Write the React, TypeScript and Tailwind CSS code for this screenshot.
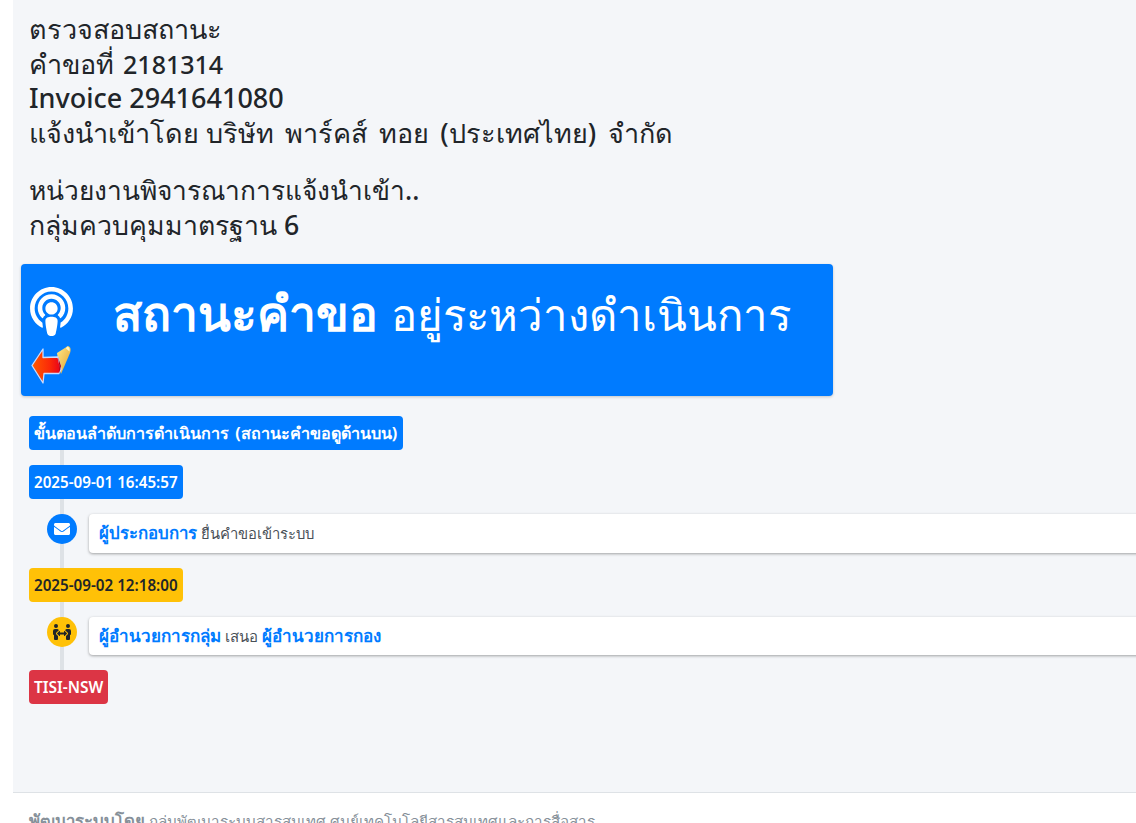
import { FaEnvelope, FaPeopleArrows, FaPodcast } from "react-icons/fa";

function BackIcon() {
  return (
    <svg width="42" height="40" viewBox="0 0 42 40" className="block">
      <defs>
        <linearGradient id="red" x1="0" x2="1" y1="0" y2="0">
          <stop offset="0" stopColor="#ff5a00" />
          <stop offset="0.6" stopColor="#fb2a08" />
          <stop offset="1" stopColor="#e8001c" />
        </linearGradient>
        <linearGradient id="paper" x1="0" x2="1" y1="0" y2="1">
          <stop offset="0" stopColor="#ffe98a" />
          <stop offset="1" stopColor="#e2a02e" />
        </linearGradient>
      </defs>
      <path d="M27 7L38 0c3 1 3 4 2 7L31 28l-2-8z" fill="url(#paper)" />
      <path d="M37 .5c2 .5 3 2 2.500 5L36 2.500z" fill="#fff6c8" />
      <path d="M13 3L2 19.500 13 37l1-9.500 15 0 2-4-3-12.500-15 .5z" fill="url(#red)" stroke="#c9dcff" strokeWidth="1.300" strokeLinejoin="round" />
      <path d="M28 11l3 9-2 8c1-6 0-11-1-17z" fill="#a8001a" />
    </svg>
  );
}
export default function App() {
  return (
    <div className="w-[1136px] h-[823px] overflow-hidden bg-white pl-[13px] text-[#212529] font-['Noto_Sans','Open_Sans',sans-serif]">
      <div className="h-[792px] bg-[#f4f6f9] pl-2 overflow-hidden">
        <div className="px-2 pt-[12px] pb-[1px] text-[27px] font-medium leading-[34.5px] whitespace-nowrap">
          <div>ตรวจสอบสถานะ</div>
          <div className="[word-spacing:2px]">คำขอที่ <span className="text-[25px]">2181314</span></div>
          <div>Invoice 2941641080</div>
          <div>แจ้งนำเข้าโดย <span className="[word-spacing:4.400px]">บริษัท พาร์คส์ ทอย (ประเทศไทย) จำกัด</span></div>
          <div className="mt-[23px] text-[26.300px]">หน่วยงานพิจารณาการแจ้งนำเข้า..</div>
          <div className="text-[26.700px]">กลุ่มควบคุมมาตรฐาน 6</div>
        </div>
        <div className="mt-[21px] w-[812px] h-[132px] bg-[#007bff] rounded-[4px] shadow-[0_1px_3px_rgba(0,0,0,0.2)] flex text-white">
          <div className="w-[90px] pl-[6px] pt-[23px] shrink-0">
            <FaPodcast size={49} className="block" />
            <div className="mt-[10px] ml-[3px]"><BackIcon /></div>
          </div>
          <div className="pl-[2px] pt-[22px] text-[43.700px] font-medium leading-[54px] whitespace-nowrap [word-spacing:2px]">
            <b className="text-[48px] font-bold">สถานะคำขอ</b> อยู่ระหว่างดำเนินการ
          </div>
        </div>
        <div className="relative mt-5 pl-2">
          <div className="absolute left-[39px] top-0 w-1 h-[270px] bg-[#dee2e6]" />
          <div className="relative flex flex-col items-start">
            <span className="h-[34px] w-[374px] px-[5px] rounded-[4px] bg-[#007bff] text-white text-[16.150px] font-bold leading-[34px] whitespace-nowrap [word-spacing:2px]">ขั้นตอนลำดับการดำเนินการ (สถานะคำขอดูด้านบน)</span>
            <span className="mt-[15px] h-[34px] px-[5px] rounded-[4px] bg-[#007bff] text-white text-[15.200px] font-semibold leading-[34px] whitespace-nowrap">2025-09-01 16:45:57</span>
            <div className="mt-[15px] flex w-[1130px] items-start">
              <div className="w-[30px] h-[30px] ml-[18px] rounded-full bg-[#007bff] text-white flex items-center justify-center shrink-0"><FaEnvelope size={16} /></div>
              <div className="ml-3 h-[39px] flex-1 bg-white rounded-[4px] shadow-[0_1px_3px_rgba(0,0,0,0.35)] px-[10px] text-[14.800px] leading-[38px] text-[#495057]">
                <b className="text-[#007bff] text-[16.800px] font-semibold">ผู้ประกอบการ</b> ยื่นคำขอเข้าระบบ
              </div>
            </div>
            <span className="mt-[15px] h-[34px] px-[5px] rounded-[4px] bg-[#ffc107] text-[#212529] text-[15.200px] font-semibold leading-[34px] whitespace-nowrap">2025-09-02 12:18:00</span>
            <div className="mt-[15px] flex w-[1130px] items-start">
              <div className="w-[30px] h-[30px] ml-[18px] rounded-full bg-[#ffc107] text-[#212529] flex items-center justify-center shrink-0"><FaPeopleArrows size={18} /></div>
              <div className="ml-3 h-[38px] flex-1 bg-white rounded-[4px] shadow-[0_1px_3px_rgba(0,0,0,0.35)] px-[10px] text-[15px] leading-[38px] text-[#495057]">
                <b className="text-[#007bff] text-[17px] font-semibold">ผู้อำนวยการกลุ่ม</b> เสนอ <b className="text-[#007bff] text-[17px] font-semibold">ผู้อำนวยการกอง</b>
              </div>
            </div>
            <span className="mt-[15px] h-[34px] px-[5px] rounded-[4px] bg-[#dc3545] text-white text-[15.500px] font-semibold leading-[34px] whitespace-nowrap">TISI-NSW</span>
          </div>
        </div>
      </div>
      <div className="h-[31px] border-t border-[#dee2e6] bg-white pl-4 pt-[16px] text-[15.200px] leading-[24px] text-[#869099] whitespace-nowrap overflow-hidden">
        <b className="text-[16.800px] font-semibold">พัฒนาระบบโดย</b> กลุ่มพัฒนาระบบสารสนเทศ ศูนย์เทคโนโลยีสารสนเทศและการสื่อสาร
      </div>
    </div>
  );
}
